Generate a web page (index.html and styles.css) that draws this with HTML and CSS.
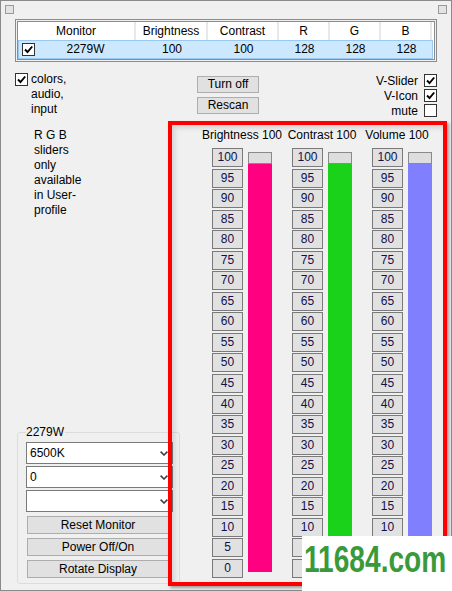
FILE: index.html
```html
<!DOCTYPE html>
<html>
<head>
<meta charset="utf-8">
<link rel="stylesheet" href="styles.css">
</head>
<body>
<div class="window">
  <div class="corners"><span class="corner"></span><span class="corner"></span></div>

  <div class="list-frame">
    <div class="list">
      <div class="list-head">
        <div class="c c1">Monitor</div>
        <div class="c c2">Brightness</div>
        <div class="c c3">Contrast</div>
        <div class="c c4">R</div>
        <div class="c c4">G</div>
        <div class="c c4">B</div>
      </div>
      <div class="list-row">
        <div class="c c1"><span class="cb row-cb"><svg viewBox="0 0 11 11" width="11" height="11"><path d="M2 5.5 L4.5 8 L9.2 2.5" fill="none" stroke="#000" stroke-width="1.9"/></svg></span><span class="mon">2279W</span></div>
        <div class="c c2">100</div>
        <div class="c c3">100</div>
        <div class="c c4">128</div>
        <div class="c c4">128</div>
        <div class="c c4">128</div>
      </div>
    </div>
  </div>

  <div class="main">
    <div class="left">
      <div class="opt">
        <span class="cb opt-cb"><svg viewBox="0 0 11 11" width="11" height="11"><path d="M2 5.5 L4.5 8 L9.2 2.5" fill="none" stroke="#000" stroke-width="1.9"/></svg></span>
        <span class="opt-text">colors,<br>audio,<br>input</span>
      </div>
      <p class="note">R G B<br>sliders<br>only<br>available<br>in User-<br>profile</p>

      <fieldset class="group">
        <legend>2279W</legend>
        <div class="combo"><span>6500K</span><svg class="chev" viewBox="0 0 8 5" width="8" height="5"><path d="M0.6 0.6 L4 4 L7.4 0.6" fill="none" stroke="#3c3c3c" stroke-width="1.5"/></svg></div>
        <div class="combo"><span>0</span><svg class="chev" viewBox="0 0 8 5" width="8" height="5"><path d="M0.6 0.6 L4 4 L7.4 0.6" fill="none" stroke="#3c3c3c" stroke-width="1.5"/></svg></div>
        <div class="combo combo-last"><span></span><svg class="chev" viewBox="0 0 8 5" width="8" height="5"><path d="M0.6 0.6 L4 4 L7.4 0.6" fill="none" stroke="#3c3c3c" stroke-width="1.5"/></svg></div>
        <div class="gbtn">Reset Monitor</div>
        <div class="gbtn">Power Off/On</div>
        <div class="gbtn">Rotate Display</div>
      </fieldset>
    </div>

    <div class="right">
      <div class="controls">
        <div class="actions">
          <div class="btn">Turn off</div>
          <div class="btn">Rescan</div>
        </div>
        <div class="toggles">
          <div class="tog"><span>V-Slider</span><span class="cb"><svg viewBox="0 0 11 11" width="11" height="11"><path d="M2 5.5 L4.5 8 L9.2 2.5" fill="none" stroke="#000" stroke-width="1.9"/></svg></span></div>
          <div class="tog"><span>V-Icon</span><span class="cb"><svg viewBox="0 0 11 11" width="11" height="11"><path d="M2 5.5 L4.5 8 L9.2 2.5" fill="none" stroke="#000" stroke-width="1.9"/></svg></span></div>
          <div class="tog"><span>mute</span><span class="cb"></span></div>
        </div>
      </div>

      <div class="sliders">
        <div class="scol">
          <div class="scol-label">Brightness 100</div>
          <div class="scol-body">
            <div class="steps">
              <div class="step">100</div><div class="step">95</div><div class="step">90</div><div class="step">85</div><div class="step">80</div><div class="step">75</div><div class="step">70</div><div class="step">65</div><div class="step">60</div><div class="step">55</div><div class="step">50</div><div class="step">45</div><div class="step">40</div><div class="step">35</div><div class="step">30</div><div class="step">25</div><div class="step">20</div><div class="step">15</div><div class="step">10</div><div class="step">5</div><div class="step">0</div>
            </div>
            <div class="bar"><div class="thumb"></div><div class="fill fill-pink"></div></div>
          </div>
        </div>
        <div class="scol">
          <div class="scol-label">Contrast 100</div>
          <div class="scol-body">
            <div class="steps">
              <div class="step">100</div><div class="step">95</div><div class="step">90</div><div class="step">85</div><div class="step">80</div><div class="step">75</div><div class="step">70</div><div class="step">65</div><div class="step">60</div><div class="step">55</div><div class="step">50</div><div class="step">45</div><div class="step">40</div><div class="step">35</div><div class="step">30</div><div class="step">25</div><div class="step">20</div><div class="step">15</div><div class="step">10</div><div class="step">5</div><div class="step">0</div>
            </div>
            <div class="bar"><div class="thumb"></div><div class="fill fill-green"></div></div>
          </div>
        </div>
        <div class="scol">
          <div class="scol-label label-shift">Volume 100</div>
          <div class="scol-body">
            <div class="steps">
              <div class="step">100</div><div class="step">95</div><div class="step">90</div><div class="step">85</div><div class="step">80</div><div class="step">75</div><div class="step">70</div><div class="step">65</div><div class="step">60</div><div class="step">55</div><div class="step">50</div><div class="step">45</div><div class="step">40</div><div class="step">35</div><div class="step">30</div><div class="step">25</div><div class="step">20</div><div class="step">15</div><div class="step">10</div><div class="step">5</div><div class="step">0</div>
            </div>
            <div class="bar"><div class="thumb"></div><div class="fill fill-blue"></div></div>
          </div>
        </div>
      </div>
    </div>
  </div>

  <div class="highlight"></div>
  <div class="watermark"><span>11684.com</span></div>
</div>
</body>
</html>
```

FILE: styles.css
```css
* { box-sizing: border-box; }

html, body {
  margin: 0;
  padding: 0;
  background: #f0f0f0;
}

body {
  font-family: "Liberation Sans", Arial, sans-serif;
  font-size: 12px;
  color: #000;
}

.window {
  position: relative;
  width: 452px;
  height: 591px;
  border: 1px solid #8a8a8a;
  background: #f0f0f0;
  display: flex;
  flex-direction: column;
}

.corners {
  display: flex;
  justify-content: space-between;
  padding: 4px 4px 0 4px;
}

.corner {
  width: 9px;
  height: 9px;
  border: 1px solid #9a9a9a;
  background: #e3e3e3;
}

/* list view */
.list-frame {
  margin: 5px 0 0 14px;
  width: 422px;
  height: 43px;
  border: 1px solid #8c8c8c;
  padding: 1px;
  background: #f0f0f0;
}

.list {
  height: 100%;
  border: 1px solid #8c8c8c;
  background: #fff;
}

.list-head, .list-row {
  display: flex;
}

.list-head {
  height: 18px;
  line-height: 18px;
}

.list-head .c {
  border-right: 2px solid #e8e8e8;
}

.list-row {
  width: 415px;
  height: 19px;
  line-height: 19px;
  background: #cce8ff;
  box-shadow: inset 0 0 0 1px #99c9f0;
}

.c {
  text-align: center;
  flex: none;
}

.c1 { width: 118px; }
.c2 { width: 72px; }
.c3 { width: 71px; }
.c4 { width: 51px; }

.list-row .c1 {
  display: flex;
  align-items: flex-start;
}

.row-cb {
  margin: 3px 0 0 4px;
}

.mon {
  flex: 1;
  text-align: center;
}

/* checkbox */
.cb {
  width: 13px;
  height: 13px;
  border: 1px solid #333;
  background: #fff;
  display: inline-flex;
  align-items: center;
  justify-content: center;
  flex: none;
}

/* main area */
.main {
  flex: 1;
  display: flex;
}

.left {
  width: 179px;
  padding-left: 14px;
  display: flex;
  flex-direction: column;
}

.opt {
  display: flex;
  align-items: flex-start;
  margin-top: 10px;
  line-height: 15px;
}

.opt-cb {
  margin-top: 1px;
  margin-right: 3px;
}

.note {
  margin: 11px 0 0 19px;
  line-height: 15px;
}

.group {
  margin: auto 0 6px 2px;
  width: 163px;
  border: 1px solid #dcdcdc;
  border-radius: 3px;
  padding: 3px 6px 5px 8px;
  min-width: 0;
}

.group legend {
  padding: 0 1px 0 0;
  line-height: 14px;
  margin-left: 0;
}

.combo {
  height: 22px;
  border: 1px solid #7a7a7a;
  background: #fff;
  display: flex;
  align-items: center;
  justify-content: space-between;
  padding: 0 4px 0 3px;
  margin-bottom: 2px;
}

.combo-last {
  margin-bottom: 4px;
}

.chev {
  display: block;
}

.gbtn {
  margin-left: 1px;
  width: 142px;
  height: 18px;
  line-height: 16px;
  text-align: center;
  background: #e1e1e1;
  border: 1px solid #adadad;
  margin-bottom: 4px;
}

.gbtn:last-child {
  margin-bottom: 0;
}

/* right side */
.right {
  flex: 1;
  display: flex;
  flex-direction: column;
}

.controls {
  display: flex;
  height: 56px;
}

.actions {
  margin-left: 17px;
  padding-top: 14px;
  display: flex;
  flex-direction: column;
  gap: 4px;
}

.btn {
  width: 62px;
  height: 17px;
  line-height: 15px;
  text-align: center;
  background: #e1e1e1;
  border: 1px solid #adadad;
}

.toggles {
  margin-left: auto;
  margin-right: 14px;
  padding-top: 11px;
}

.tog {
  height: 15px;
  display: flex;
  align-items: center;
  justify-content: flex-end;
  gap: 6px;
}

.sliders {
  margin-top: 10px;
  padding-left: 32px;
  display: flex;
  gap: 20px;
}

.scol {
  width: 60px;
  display: flex;
  flex-direction: column;
  align-items: center;
}

.scol-label {
  line-height: 15px;
  white-space: nowrap;
  margin-bottom: 5px;
}

.label-shift {
  margin-right: 10px;
}

.scol-body {
  width: 60px;
  display: flex;
  gap: 5px;
  align-items: flex-start;
}

.steps {
  width: 31px;
  height: 430px;
  display: flex;
  flex-direction: column;
  justify-content: space-between;
}

.step {
  height: 19px;
  line-height: 17px;
  text-align: center;
  background: #e1e1e1;
  border: 1px solid #7a7a7a;
  color: #10104a;
}

.bar {
  width: 24px;
  margin-top: 4px;
}

.thumb {
  height: 12px;
  border: 1px solid #8a8a8a;
  background: #dedede;
}

.fill {
  height: 408px;
}

.fill-pink { background: #ff0080; }
.fill-green { background: #1ad21a; }
.fill-blue { background: #8080ff; }

/* annotation overlay */
.highlight {
  position: absolute;
  left: 167px;
  top: 120px;
  width: 279px;
  height: 465px;
  border: 4px solid #ff0000;
  box-shadow: 2px 2px 3px rgba(0, 0, 0, 0.35), inset 3px 3px 5px rgba(0, 0, 0, 0.12);
  pointer-events: none;
}

.watermark {
  position: absolute;
  left: 301px;
  top: 535px;
  width: 150px;
  height: 56px;
  background: #fff;
  overflow: hidden;
}

.watermark span {
  display: block;
  font-family: "Liberation Sans", Arial, sans-serif;
  font-weight: bold;
  font-size: 37px;
  line-height: 40px;
  color: #3a9a3a;
  white-space: nowrap;
  transform: scaleX(0.76);
  transform-origin: left top;
  margin: 4px 0 0 2px;
}
```
